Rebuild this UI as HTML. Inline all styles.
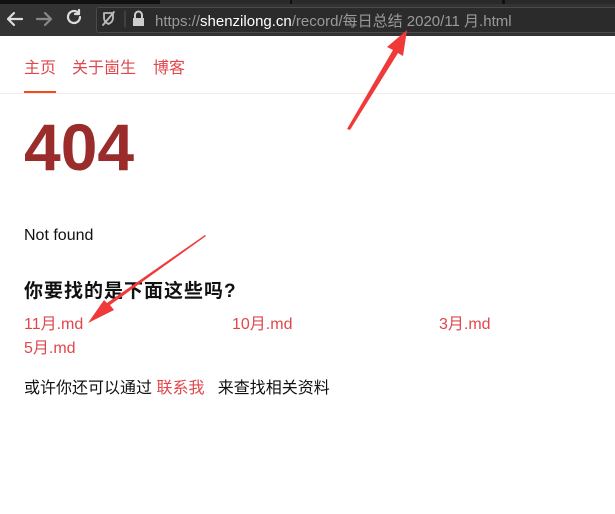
<!DOCTYPE html>
<html><head><meta charset="utf-8"><style>
*{margin:0;padding:0;box-sizing:border-box}
body{width:615px;height:514px;overflow:hidden;background:#fff;font-family:"Liberation Sans","Noto Sans CJK SC",sans-serif;position:relative}
.chrome{position:absolute;left:0;top:0;width:615px;height:36px;background:#333}
.tabs{position:absolute;left:0;top:0;width:615px;height:4px;background:#111}
.tabs i{position:absolute;top:0;height:4px;background:#2a2a2a}
.url{position:absolute;left:96px;top:7px;width:530px;height:26px;background:#2b2b2b;border:1px solid #4a4a4a;border-radius:3px}
.urltext{position:absolute;top:10px;font-size:15px;color:#9a9a9a;white-space:nowrap}
.urltext b{font-weight:normal;color:#fff}
.abs{position:absolute;white-space:nowrap}
.nav{top:54px;font-size:16px;color:#e0474c}
a{color:#e0474c;text-decoration:none}
</style></head><body>
<div class="chrome"><div class="tabs"><i style="left:160px;width:130px"></i><i style="left:292px;width:210px"></i><i style="left:505px;width:110px"></i></div>
<div class="url"></div>
<svg class="abs" style="left:0;top:0" width="160" height="36" viewBox="0 0 160 36">
<g fill="none" stroke="#ddd" stroke-width="2.2" stroke-linecap="round" stroke-linejoin="round">
<path d="M22 19H8M14 13l-6 6 6 6"/>
<path stroke="#888" d="M37 19h14M45 13l6 6-6 6"/>
<path d="M80 17a6 6 0 1 1-2-4.5"/><path d="M79 10v4h-4"/>
<path stroke="#bbb" stroke-width="1.8" d="M104 13h9v5q0 4-4.5 6q-4.5-2-4.5-6zM103 25l11-13"/>
<path stroke="#555" stroke-width="1" d="M125 11v16"/>
</g>
<rect x="133" y="18" width="11" height="8" fill="#ccc"/><path d="M135 18v-3a3.5 3.5 0 0 1 7 0v3" fill="none" stroke="#ccc" stroke-width="2"/>
</svg>
<div class="urltext" style="left:155px">https://<b>shenzilong.cn</b>/record/每日总结 2020/11 月.html</div>
</div>
<div class="abs nav" style="left:24px">主页</div>
<div class="abs nav" style="left:72px">关于崮生</div>
<div class="abs nav" style="left:153px">博客</div>
<div class="abs" style="left:24px;top:91px;width:32px;height:2px;background:#f04a1a"></div>
<div class="abs" style="left:0;top:93px;width:615px;height:1px;background:#f3ece8"></div>
<div class="abs" style="left:24px;top:110px;font-size:66px;font-weight:bold;color:#9b2c2c;line-height:75px">404</div>
<div class="abs" style="left:24px;top:227px;font-size:16px;color:#111">Not found</div>
<div class="abs" style="left:24px;top:276px;font-size:19px;font-weight:bold;color:#111;letter-spacing:1px">你要找的是下面这些吗?</div>
<div class="abs" style="left:24px;top:310px;font-size:16px"><a>11月.md</a></div>
<div class="abs" style="left:232px;top:310px;font-size:16px"><a>10月.md</a></div>
<div class="abs" style="left:439px;top:310px;font-size:16px"><a>3月.md</a></div>
<div class="abs" style="left:24px;top:334px;font-size:16px"><a>5月.md</a></div>
<div class="abs" style="left:24px;top:374px;font-size:16px;color:#111">或许你还可以通过 <a>联系我</a>&nbsp;&nbsp;&nbsp;来查找相关资料</div>
<svg class="abs" style="left:0;top:0" width="615" height="514">
<polygon fill="#f03a3a" points="347,129 393,50 387,47 407,30 403,56 398,53 350,130"/>
<polygon fill="#f03a3a" points="206,236 110,305 114,310 88,323 104,300 107,303 205,235"/>
</svg>
</body></html>
